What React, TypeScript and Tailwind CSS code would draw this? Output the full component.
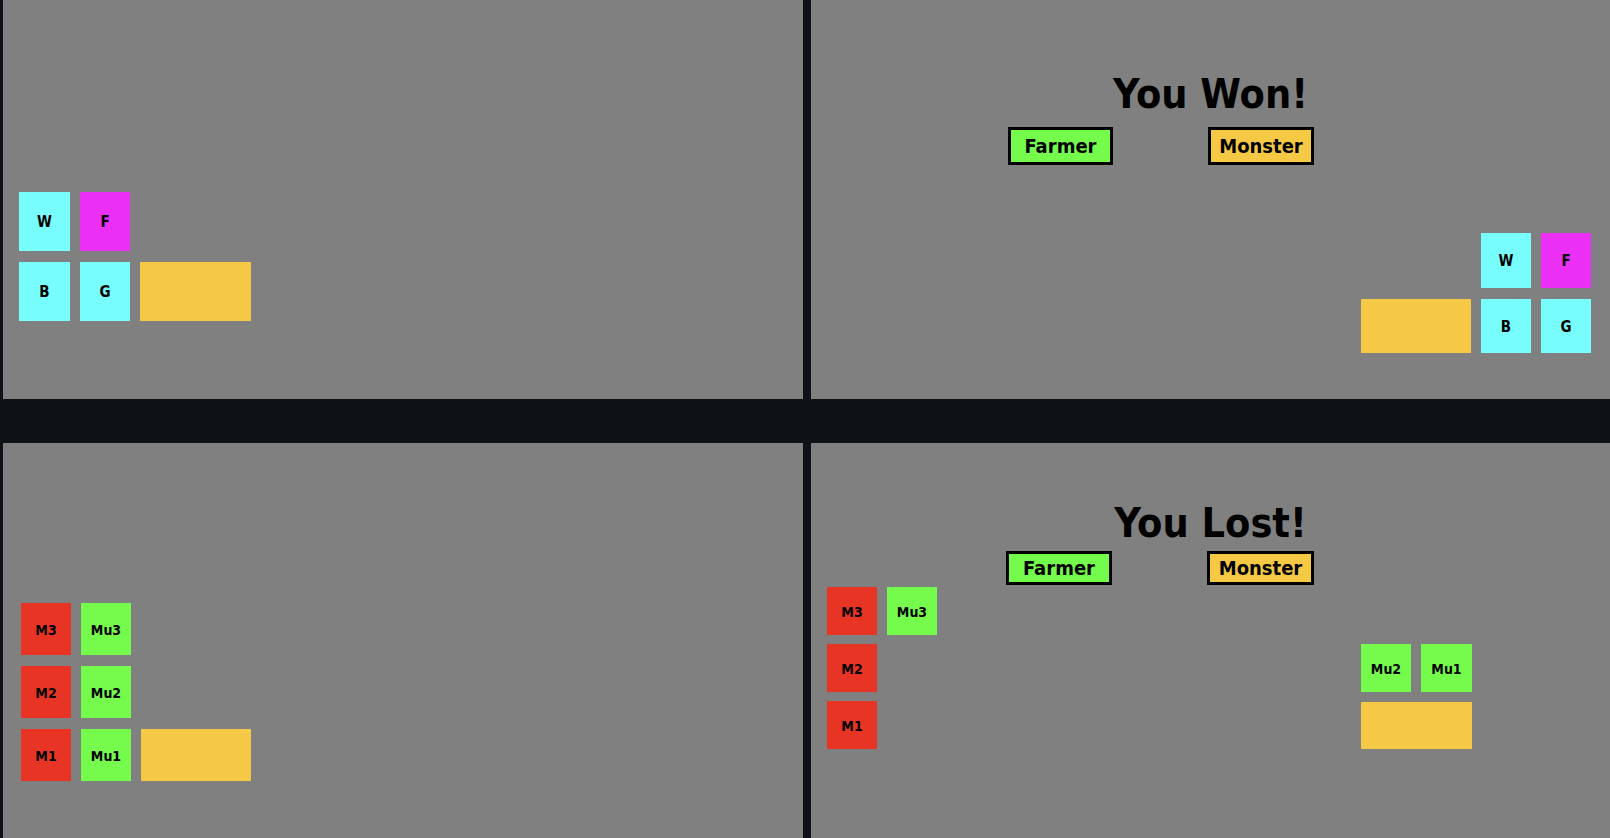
import React from "react";

const FONT = "font-['DejaVu_Sans_Condensed','DejaVu_Sans',sans-serif]";

function Tile({ label, className }: { label?: string; className: string }) {
  return (
    <div className={`flex items-center justify-center pt-[2px] font-bold text-black ${className}`}>
      {label}
    </div>
  );
}

function Btn({ label, className }: { label: string; className: string }) {
  return (
    <div
      className={`flex items-center justify-center border-[3px] border-black font-bold text-[20px] text-black ${className}`}
    >
      {label}
    </div>
  );
}

export default function App() {
  return (
    <div
      className={`w-[1610px] h-[838px] overflow-hidden bg-[#0e1116] pl-[3px] grid grid-cols-[800px_799px] grid-rows-[399px_395px] gap-x-[8px] gap-y-[44px] ${FONT}`}
    >
      {/* Top left */}
      <div className="bg-[#808080] pl-[16px] pt-[192px] flex flex-col gap-[11px]">
        <div className="flex gap-[10px]">
          <Tile label="W" className="w-[51px] h-[59px] bg-[#78fdfd] text-[15px]" />
          <Tile label="F" className="w-[50px] h-[59px] bg-[#eb2ff5] text-[15px]" />
        </div>
        <div className="flex gap-[10px]">
          <Tile label="B" className="w-[51px] h-[59px] bg-[#78fdfd] text-[15px]" />
          <Tile label="G" className="w-[50px] h-[59px] bg-[#78fdfd] text-[15px]" />
          <Tile className="w-[111px] h-[59px] bg-[#f5c945]" />
        </div>
      </div>

      {/* Top right */}
      <div className="bg-[#808080] flex flex-col">
        <div className="pt-[74px] text-center text-[41px] leading-[40px] font-bold text-black">
          You Won!
        </div>
        <div className="mt-[13px] pl-[197px] flex gap-[95px]">
          <Btn label="Farmer" className="w-[105px] h-[38px] bg-[#75fb4b]" />
          <Btn label="Monster" className="w-[106px] h-[38px] bg-[#f6c945]" />
        </div>
        <div className="mt-[68px] pr-[19px] flex flex-col items-end gap-[11px]">
          <div className="flex gap-[10px]">
            <Tile label="W" className="w-[50px] h-[55px] bg-[#78fdfd] text-[15px]" />
            <Tile label="F" className="w-[50px] h-[55px] bg-[#eb2ff5] text-[15px]" />
          </div>
          <div className="flex gap-[10px]">
            <Tile className="w-[110px] h-[54px] bg-[#f5c945]" />
            <Tile label="B" className="w-[50px] h-[54px] bg-[#78fdfd] text-[15px]" />
            <Tile label="G" className="w-[50px] h-[54px] bg-[#78fdfd] text-[15px]" />
          </div>
        </div>
      </div>

      {/* Bottom left */}
      <div className="bg-[#808080] pl-[18px] pt-[160px] flex flex-col gap-[11px]">
        <div className="flex gap-[10px]">
          <Tile label="M3" className="w-[50px] h-[52px] bg-[#e83424] text-[14px]" />
          <Tile label="Mu3" className="w-[50px] h-[52px] bg-[#75fb4b] text-[14px]" />
        </div>
        <div className="flex gap-[10px]">
          <Tile label="M2" className="w-[50px] h-[52px] bg-[#e83424] text-[14px]" />
          <Tile label="Mu2" className="w-[50px] h-[52px] bg-[#75fb4b] text-[14px]" />
        </div>
        <div className="flex gap-[10px]">
          <Tile label="M1" className="w-[50px] h-[52px] bg-[#e83424] text-[14px]" />
          <Tile label="Mu1" className="w-[50px] h-[52px] bg-[#75fb4b] text-[14px]" />
          <Tile className="w-[110px] h-[52px] bg-[#f5c945]" />
        </div>
      </div>

      {/* Bottom right */}
      <div className="bg-[#808080] flex flex-col">
        <div className="pt-[60px] text-center text-[41px] leading-[40px] font-bold text-black">
          You Lost!
        </div>
        <div className="mt-[8px] pl-[195px] flex gap-[95px]">
          <Btn label="Farmer" className="w-[106px] h-[34px] bg-[#75fb4b]" />
          <Btn label="Monster" className="w-[107px] h-[34px] bg-[#f6c945]" />
        </div>
        <div className="mt-[2px] flex">
          <div className="pl-[16px] flex flex-col gap-[9px]">
            <div className="flex gap-[10px]">
              <Tile label="M3" className="w-[50px] h-[48px] bg-[#e83424] text-[14px]" />
              <Tile label="Mu3" className="w-[50px] h-[48px] bg-[#75fb4b] text-[14px]" />
            </div>
            <Tile label="M2" className="w-[50px] h-[48px] bg-[#e83424] text-[14px]" />
            <Tile label="M1" className="w-[50px] h-[48px] bg-[#e83424] text-[14px]" />
          </div>
          <div className="ml-[424px] pt-[57px] flex flex-col gap-[10px]">
            <div className="flex gap-[10px]">
              <Tile label="Mu2" className="w-[50px] h-[48px] bg-[#75fb4b] text-[14px]" />
              <Tile label="Mu1" className="w-[51px] h-[48px] bg-[#75fb4b] text-[14px]" />
            </div>
            <Tile className="w-[111px] h-[47px] bg-[#f5c945]" />
          </div>
        </div>
      </div>
    </div>
  );
}
